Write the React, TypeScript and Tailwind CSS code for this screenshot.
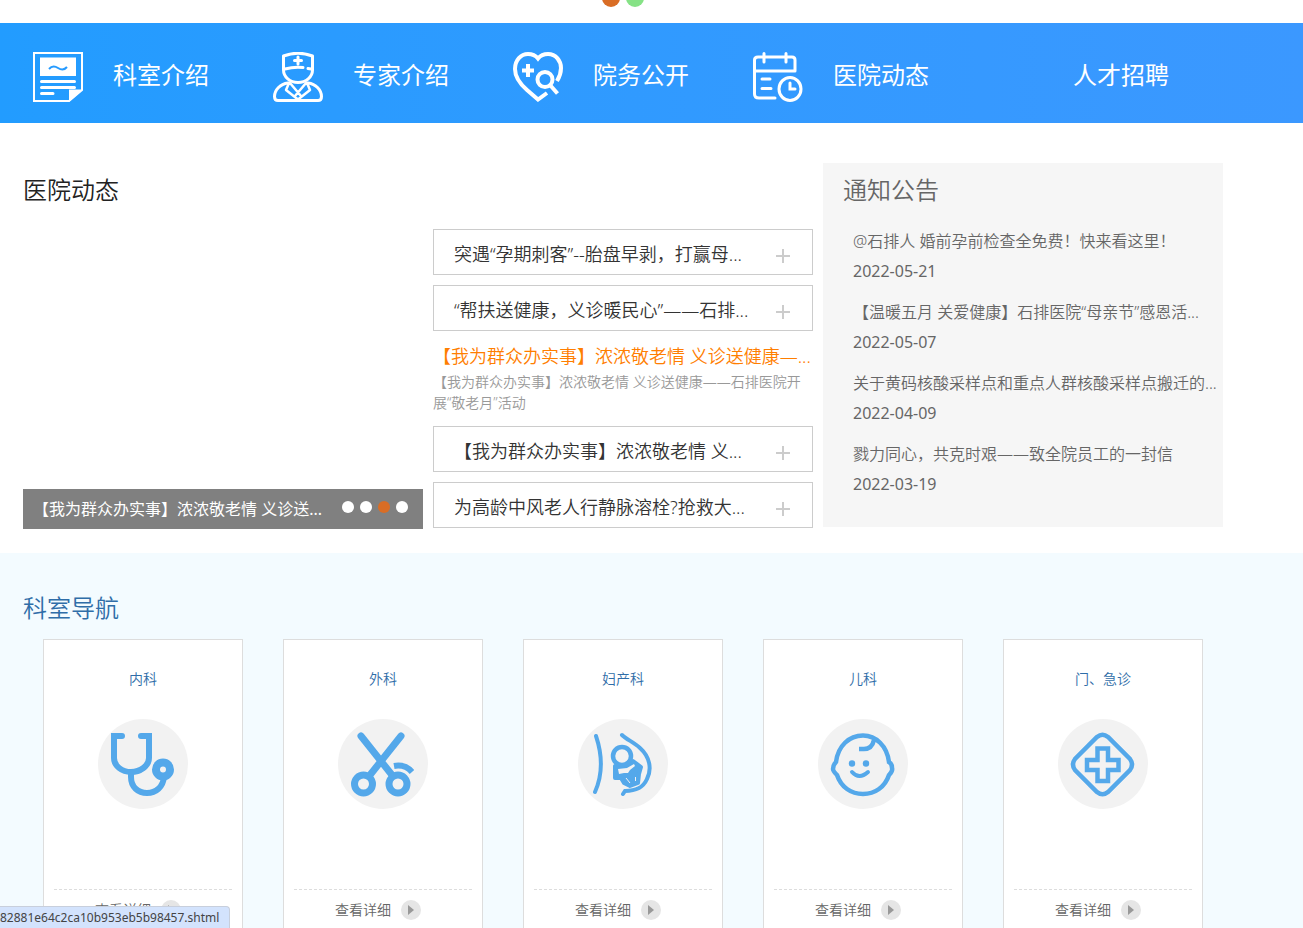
import type { ReactNode } from "react";

const NavDocIcon = () => (
  <svg width="50" height="50" viewBox="0 0 50 50" fill="none" aria-hidden="true">
    <path d="M1 1H49V38L36 49H1Z" stroke="#fff" strokeWidth="2" />
    <path d="M36 37.5H50L36 50Z" fill="#fff" />
    <path d="M7 5.5H43V24H7Z" fill="#fff" />
    <path d="M16 17C19 13.5 22 14 25 16S31 18.5 34 15" stroke="#269bff" strokeWidth="2" />
    <path d="M8.5 29.5H41.5M8.5 35.5H41.5M8.5 41.5H20" stroke="#fff" strokeWidth="3" strokeLinecap="round" />
  </svg>
);

const NavDoctorIcon = () => (
  <svg width="50" height="50" viewBox="0 0 50 50" fill="none" stroke="#fff" strokeWidth="3" strokeLinecap="round" strokeLinejoin="round" aria-hidden="true">
    <path d="M10.5 4Q25 -1.5 39.5 4V18C39.5 25 33 30.5 25 30.5S10.5 25 10.5 18Z" />
    <path d="M12 17Q21 14.5 30 15.5M35 16.5L38 17M25 5V12M21.5 8.5H28.5" />
    <path d="M15 31C7 32 1.5 38 1.5 44.5Q1.5 48.5 5 48.5H45Q48.5 48.5 48.5 44.5C48.5 38 43 32 35 31" />
    <path d="M16 31L13 38L25 47.5L37 38L34 31M17 31L28 44M33 31L22 44" strokeWidth="2.5" />
  </svg>
);

const NavHeartIcon = () => (
  <svg width="50" height="50" viewBox="0 0 50 50" fill="none" stroke="#fff" strokeWidth="4" aria-hidden="true">
    <path d="M34 41L25 47.5L14 38C6 31 2 25 2 17C2 8 8 2 15 2C20 2 23 4 25 6.5C27 4 30 2 35 2C43 2 48 9 48 16C48 21 46.5 25 44 29" />
    <path d="M15 12V25M9 18.5H21" />
    <circle cx="32" cy="27.5" r="7.5" />
    <path d="M37 33L44.5 41.5" />
  </svg>
);

const NavCalendarIcon = () => (
  <svg width="50" height="50" viewBox="0 0 50 50" fill="none" stroke="#fff" strokeWidth="3" strokeLinecap="round" aria-hidden="true">
    <path d="M42 19V8Q42 5 39 5H5Q1.5 5 1.5 8V42Q1.5 46 6 46H22M2 19H42M11 1.5V10M33 1.5V10" />
    <path d="M9 27H17M9 36.5H18" />
    <ellipse cx="37" cy="37" rx="11" ry="11.5" />
    <path d="M37 31V37H42" />
  </svg>
);

const DeptIcon = ({ children }: { children: ReactNode }) => (
  <svg
    className="size-[90px] rounded-full bg-[#f2f2f2]"
    viewBox="0 0 90 90"
    fill="none"
    stroke="#54a8ea"
    strokeWidth="6"
    aria-hidden="true"
  >
    {children}
  </svg>
);

const NAV_ITEMS = [
  { label: "科室介绍", icon: <NavDocIcon /> },
  { label: "专家介绍", icon: <NavDoctorIcon /> },
  { label: "院务公开", icon: <NavHeartIcon /> },
  { label: "医院动态", icon: <NavCalendarIcon /> },
  { label: "人才招聘", icon: null },
];

const NOTICES = [
  { title: "@石排人 婚前孕前检查全免费！快来看这里！", date: "2022-05-21" },
  { title: "【温暖五月 关爱健康】石排医院“母亲节”感恩活...", date: "2022-05-07" },
  { title: "关于黄码核酸采样点和重点人群核酸采样点搬迁的...", date: "2022-04-09" },
  { title: "戮力同心，共克时艰——致全院员工的一封信", date: "2022-03-19" },
];

const DEPARTMENTS = [
  {
    name: "内科",
    icon: (
      <DeptIcon>
        <path d="M24 17H16V39C16 47 24 53 33 53S51 47 51 39V17H43" />
        <path d="M23 17H24M43 17H44" strokeLinecap="round" />
        <path d="M33 53V58C33 68 40 74 49 74S65 68 66 58" />
        <circle cx="65" cy="50.5" r="7" strokeWidth="8" />
      </DeptIcon>
    ),
  },
  {
    name: "外科",
    icon: (
      <DeptIcon>
        <path d="M23 17L54 56M63 17L32 56" strokeLinecap="round" strokeWidth="7" />
        <circle cx="25.5" cy="65" r="9" strokeWidth="7" />
        <circle cx="60" cy="65" r="9" strokeWidth="7" />
        <path d="M56 47Q67 45 74 53" />
      </DeptIcon>
    ),
  },
  {
    name: "妇产科",
    icon: (
      <DeptIcon>
        <path
          d="M18 17C24 35 25 55 17 73M44 16C49 21 56 23 62 29C72 38 74 50 69 60C65 69 58 72 47 72L45 75"
          strokeWidth="4"
          strokeLinecap="round"
        />
        <path
          d="M37 47L37 59L43 59L46 64L52 67L60 64L61 55L63 48L55 42L51 46L41 48Z"
          fill="#54a8ea"
          strokeWidth="4"
          strokeLinejoin="round"
        />
        <circle cx="44" cy="37" r="9" fill="#f2f2f2" strokeWidth="4.5" />
        <path d="M40 50L49 49L56 45L57 47L52 51L50 54L46 54L41 55Z" fill="#f2f2f2" stroke="none" />
        <path d="M48 59L52 64M57.5 58V62" stroke="#f2f2f2" strokeWidth="1" />
      </DeptIcon>
    ),
  },
  {
    name: "儿科",
    icon: (
      <DeptIcon>
        <g strokeWidth="4.5">
          <path d="M45 16.5C31 16.5 20 27 18 43C16 45 15 47 15 50C15 52 17 54 19 56C23 68 33 75 45 75S67 68 71 56C73 54 75 52 74 49C74 46 73 44 71 43C69 27 58 16.5 45 16.5Z" />
          <path d="M41 30H46Q54 30 56 21" />
          <path d="M34 53Q41 61 50 53" strokeWidth="4" strokeLinecap="round" />
        </g>
        <circle cx="34" cy="44.5" r="3.2" fill="#54a8ea" stroke="none" />
        <circle cx="48" cy="44.5" r="3.2" fill="#54a8ea" stroke="none" />
      </DeptIcon>
    ),
  },
  {
    name: "门、急诊",
    icon: (
      <DeptIcon>
        <g strokeWidth="4.5">
          <path d="M39 18Q44.5 13.5 50 18L72 40Q76 45.5 72 51L50 73Q44.5 77.5 39 73L17 51Q13 45.5 17 40Z" />
          <path d="M39.5 29.5H50V41H60.5V51H50V62H39.5V51H29V41H39.5Z" />
        </g>
      </DeptIcon>
    ),
  },
];

const NewsRow = ({ title }: { title: string }) => (
  <a
    href="#"
    className="flex h-[46px] items-center justify-between border border-[#ccc] pt-[3px] pr-[22px] pl-5 text-lg text-[#333]"
  >
    <span className="whitespace-nowrap">{title}</span>
    <svg className="mt-1" width="14" height="14" viewBox="0 0 14 14" stroke="#ccc" strokeWidth="2" aria-hidden="true">
      <path d="M7 0V14M0 7H14" />
    </svg>
  </a>
);

const SlideDot = ({ index, active }: { index: number; active?: boolean }) => (
  <button
    type="button"
    aria-label={`第${index}张`}
    className={active ? "size-3 rounded-full bg-[#d96d25]" : "size-3 rounded-full bg-white"}
  />
);

const App = () => {
  return (
    <div className="overflow-x-hidden bg-white font-['Noto_Sans','Noto_Sans_CJK_SC',sans-serif] font-[350]">
      {/* lower edge of the banner with its pager */}
      <header className="ml-[23px] flex h-[23px] max-w-[1200px] items-start justify-center gap-1.5 overflow-hidden">
        <button type="button" aria-label="横幅1" className="-mt-[11px] size-[18px] rounded-full bg-[#d96d25]" />
        <button type="button" aria-label="横幅2" className="-mt-[11px] size-[18px] rounded-full bg-[#86e286]" />
      </header>

      <nav className="bg-linear-to-r from-[#229cff] to-[#3b98ff]">
        <ul className="ml-[23px] grid h-[100px] max-w-[1200px] grid-cols-5">
          {NAV_ITEMS.map(({ label, icon }) => (
            <li key={label}>
              <a href="#" className="flex h-full items-center gap-[30px] pt-2 pl-2.5 text-2xl font-normal text-white">
                <span className="size-[50px] shrink-0">{icon}</span>
                <span className="pb-1 whitespace-nowrap">{label}</span>
              </a>
            </li>
          ))}
        </ul>
      </nav>

      <main>
        <section className="ml-[23px] flex max-w-[1200px] items-start gap-2.5 pt-10 pb-6">
          <div className="flex-1">
            <h2 className="text-2xl leading-[54px] text-[#222]">医院动态</h2>
            <div className="flex gap-2.5 pt-3">
              <div className="flex min-h-[300px] w-[400px] flex-col justify-end">
                <div className="flex h-10 items-center justify-between bg-[#808080] pr-[15px] pl-2.5 text-white">
                  <a href="#" className="font-normal whitespace-nowrap">
                    【我为群众办实事】浓浓敬老情 义诊送...
                  </a>
                  <div className="flex gap-1.5 pb-1">
                    <SlideDot index={1} />
                    <SlideDot index={2} />
                    <SlideDot index={3} active />
                    <SlideDot index={4} />
                  </div>
                </div>
              </div>

              <div className="flex flex-1 flex-col gap-2.5">
                <NewsRow title="突遇“孕期刺客”--胎盘早剥，打赢母..." />
                <NewsRow title="“帮扶送健康，义诊暖民心”——石排..." />
                <div className="pb-[3px]">
                  <a href="#" className="block text-lg leading-[30px] whitespace-nowrap text-[#ff7e00]">
                    【我为群众办实事】浓浓敬老情 义诊送健康—...
                  </a>
                  <p className="text-sm leading-[21px] text-[#999]">
                    【我为群众办实事】浓浓敬老情 义诊送健康——石排医院开展“敬老月”活动
                  </p>
                </div>
                <NewsRow title="【我为群众办实事】浓浓敬老情 义..." />
                <NewsRow title="为高龄中风老人行静脉溶栓?抢救大..." />
              </div>
            </div>
          </div>

          <aside className="w-[400px] bg-[#f6f6f6] pb-7 text-[#666]">
            <h2 className="pl-5 text-2xl leading-[54px]">通知公告</h2>
            <ul className="flex flex-col gap-[11px] pt-[9px] pl-[30px] leading-[30px]">
              {NOTICES.map(({ title, date }) => (
                <li key={date}>
                  <a href="#" className="block whitespace-nowrap">
                    {title}
                  </a>
                  <time dateTime={date} className="block font-normal">
                    {date}
                  </time>
                </li>
              ))}
            </ul>
          </aside>
        </section>

        <section className="bg-[#f3fbff] pt-7 pb-10">
          <div className="ml-[23px] max-w-[1200px]">
            <h2 className="text-2xl leading-[54px] text-[#2f6da8]">科室导航</h2>
            <ul className="grid grid-cols-5 gap-10 px-5 pt-1">
              {DEPARTMENTS.map(({ name, icon }) => (
                <li key={name} className="border border-[#ddd] bg-white px-2.5 pt-7 pb-5 text-sm">
                  <a href="#" className="flex h-[221px] flex-col items-center gap-[29px] leading-[22px] text-[#2f6da8]">
                    <span>{name}</span>
                    {icon}
                  </a>
                  <a
                    href="#"
                    className="flex items-center justify-center gap-2.5 border-t border-dashed border-[#ddd] pt-2.5 pr-2.5 text-[#666]"
                  >
                    查看详细
                    <svg className="size-5 rounded-full bg-[#e5e5e5]" viewBox="0 0 20 20" aria-hidden="true">
                      <path d="M7 5L13 10L7 15Z" fill="#999" />
                    </svg>
                  </a>
                </li>
              ))}
            </ul>
          </div>
        </section>
      </main>

      {/* link address shown over the page while hovering */}
      <div className="fixed bottom-0 left-0 h-[22px] w-[230px] rounded-tr border-t border-r border-[#c8cfdc] bg-[#d3e3fd] text-xs leading-[22px] font-normal text-[#444]">
        82881e64c2ca10b953eb5b98457.shtml
      </div>
    </div>
  );
};

export default App;
